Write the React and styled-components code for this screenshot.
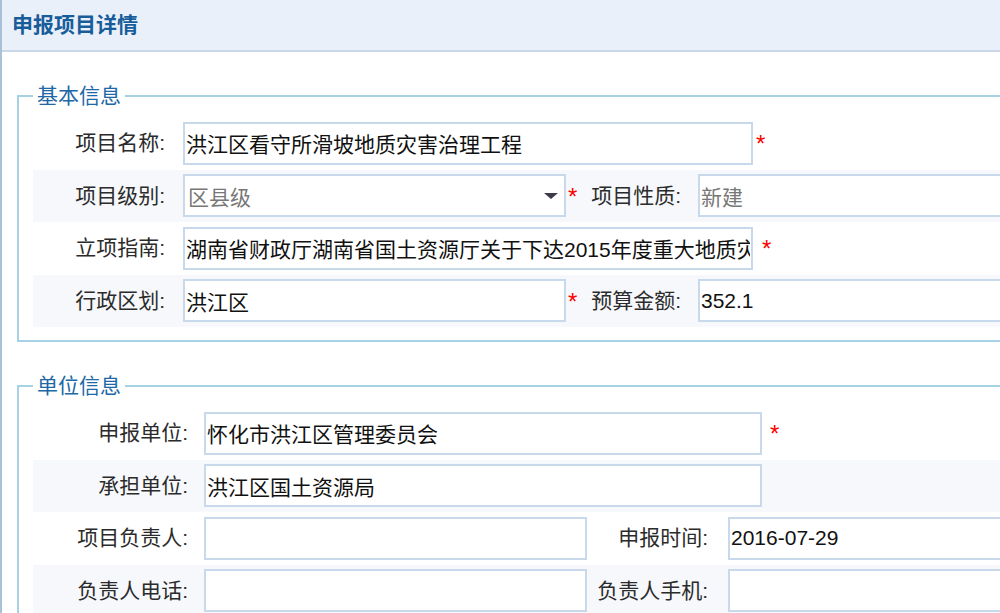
import React from 'react';
import styled, { createGlobalStyle } from 'styled-components';

const GlobalStyle = createGlobalStyle`
  html, body {
    margin: 0;
    padding: 0;
    overflow: hidden;
    background: #fff;
  }
  body {
    font-family: "Liberation Sans", "Noto Sans CJK SC", sans-serif;
  }
`;

const Page = styled.div`
  width: 1200px;
  min-height: 100vh;
  border-left: 2px solid #a9c0d6;
`;

const Header = styled.div`
  height: 50px;
  display: flex;
  align-items: center;
  padding-left: 10px;
  background: #e9f0fa;
  border-bottom: 2px solid #c9d7e8;
`;

const Title = styled.h2`
  margin: 0;
  font-size: 21px;
  line-height: 24px;
  font-weight: bold;
  color: #195c9a;
`;

const Body = styled.div`
  padding: 32px 0 0 15px;
`;

const Fieldset = styled.fieldset`
  margin: 0 0 32px 0;
  padding: 9px 0 13px 14px;
  border: 2px solid #a6d2e5;
  min-width: 0;
`;

const Legend = styled.legend`
  padding: 0 4px;
  font-size: 21px;
  line-height: 24px;
  color: #2067a6;
`;

const Row = styled.div`
  display: grid;
  grid-template-columns: ${p => p.$cols};
  align-items: center;
  height: 52.5px;
  background: ${p => (p.$shaded ? '#f6f8fb' : 'transparent')};
`;

const Label = styled.div`
  padding-right: ${p => p.$pad}px;
  text-align: right;
  font-size: 21px;
  line-height: 24px;
  color: #2b2b2b;
  white-space: nowrap;
`;

const Field = styled.div`
  display: flex;
  align-items: center;
  grid-column: ${p => (p.$wide ? '2 / -1' : 'auto')};
`;

const Input = styled.input`
  box-sizing: border-box;
  width: ${p => p.$width || '100%'};
  height: 43px;
  margin: 0;
  padding: 0 1px;
  border: 2px solid #c8d9ec;
  border-radius: 0;
  outline: none;
  background: #fff;
  font-family: inherit;
  font-size: 21px;
  color: ${p => (p.disabled ? '#777' : '#111')};
`;

const Select = styled.div`
  box-sizing: border-box;
  width: 100%;
  height: 43px;
  display: flex;
  align-items: center;
  justify-content: space-between;
  padding: 0 4px 0 3px;
  border: 2px solid #c8d9ec;
  background: #fff;
  font-size: 21px;
  color: #777;
`;

const Caret = styled.span`
  width: 0;
  height: 0;
  margin-right: 2px;
  border-left: 7px solid transparent;
  border-right: 7px solid transparent;
  border-top: 6px solid #3b3b4a;
`;

const Star = styled.span`
  margin-left: ${p => p.$gap}px;
  margin-top: 2px;
  font-family: "Liberation Sans", sans-serif;
  font-size: 24px;
  line-height: 24px;
  color: #f00;
`;

const BASIC_COLS = '150px 383px 16px 116px 1fr';
const UNIT_COLS = '171px 383px 141px 1fr';

function WideRow({ cols, pad, label, value, width, star, shaded }) {
  return (
    <Row $cols={cols} $shaded={shaded}>
      <Label $pad={pad}>{label}</Label>
      <Field $wide>
        <Input readOnly value={value} $width={width} />
        {star != null && <Star $gap={star}>*</Star>}
      </Field>
    </Row>
  );
}

export default function App() {
  return (
    <>
      <GlobalStyle />
      <Page>
        <Header>
          <Title>申报项目详情</Title>
        </Header>
        <Body>
          <Fieldset>
            <Legend>基本信息</Legend>
            <WideRow cols={BASIC_COLS} pad={18} label="项目名称:" value="洪江区看守所滑坡地质灾害治理工程" width="570px" star={3} />
            <Row $cols={BASIC_COLS} $shaded>
              <Label $pad={18}>项目级别:</Label>
              <Select>
                <span>区县级</span>
                <Caret />
              </Select>
              <Star $gap={2}>*</Star>
              <Label $pad={17}>项目性质:</Label>
              <Input readOnly disabled value="新建" />
            </Row>
            <WideRow cols={BASIC_COLS} pad={18} label="立项指南:" value="湖南省财政厅湖南省国土资源厅关于下达2015年度重大地质灾害治理项目资金的通知" width="570px" star={9} />
            <Row $cols={BASIC_COLS} $shaded>
              <Label $pad={18}>行政区划:</Label>
              <Input readOnly value="洪江区" />
              <Star $gap={2}>*</Star>
              <Label $pad={17}>预算金额:</Label>
              <Input readOnly value="352.1" />
            </Row>
          </Fieldset>

          <Fieldset>
            <Legend>单位信息</Legend>
            <WideRow cols={UNIT_COLS} pad={16} label="申报单位:" value="怀化市洪江区管理委员会" width="558px" star={8} />
            <WideRow cols={UNIT_COLS} pad={16} label="承担单位:" value="洪江区国土资源局" width="558px" shaded />
            <Row $cols={UNIT_COLS}>
              <Label $pad={16}>项目负责人:</Label>
              <Input readOnly value="" />
              <Label $pad={20}>申报时间:</Label>
              <Input readOnly value="2016-07-29" />
            </Row>
            <Row $cols={UNIT_COLS} $shaded>
              <Label $pad={16}>负责人电话:</Label>
              <Input readOnly value="" />
              <Label $pad={20}>负责人手机:</Label>
              <Input readOnly value="" />
            </Row>
          </Fieldset>
        </Body>
      </Page>
    </>
  );
}
